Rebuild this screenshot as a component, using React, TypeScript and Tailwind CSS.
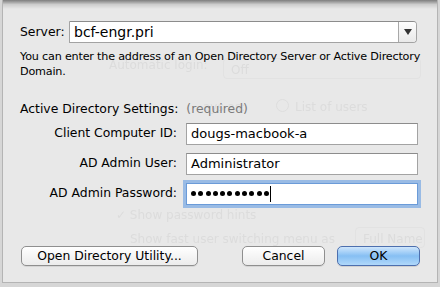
import React from "react";

const ghost = "absolute whitespace-nowrap text-[12px] text-[#dcdcdc] blur-[0.5px]";

function Field({ label, value, focused }: { label: string; value: React.ReactNode; focused?: boolean }) {
  return (
    <div className="flex h-[30px] items-center">
      <div className="w-[157px] text-right text-[12.4px]">{label}</div>
      <div className="ml-[9px] flex w-[232px]">
        <div
          className={`flex h-[22px] w-full items-center border bg-white pl-[4px] text-[13px] ${
            focused
              ? "border-[#6b9bd8] shadow-[0_0_0_3px_rgba(120,168,228,0.7)]"
              : "border-[#a3a3a3] border-t-[#8c8c8c]"
          }`}
        >
          {value}
        </div>
      </div>
    </div>
  );
}

function Dots({ n }: { n: number }) {
  return (
    <span className="flex items-center gap-[2.3px]">
      {Array.from({ length: n }, (_, i) => (
        <span key={i} className="h-[5px] w-[5px] rounded-full bg-black" />
      ))}
    </span>
  );
}

export default function App() {
  return (
    <div
      className="relative h-[287px] w-[440px] overflow-hidden bg-[#d6d6d6] text-[12.4px] text-black"
      style={{ fontFamily: '"DejaVu Sans", "Liberation Sans", sans-serif' }}
    >
      <div className="relative mx-[2px] h-[283px] border-x border-b border-[#b4b4b4] bg-[#e8e8e8]">
        {/* the window behind, showing through the sheet */}
        <div className="pointer-events-none" aria-hidden>
          <span className={`${ghost} left-[106px] top-[56px]`}>Automatic login:</span>
          <div className="absolute left-[220px] top-[58px] h-[21px] w-[198px] rounded-[4px] border border-[#e2e2e2]" />
          <span className={`${ghost} left-[228px] top-[61px]`}>Off</span>
          <span className={`${ghost} left-[200px] top-[98px]`}>ays as:</span>
          <div className="absolute left-[273px] top-[99px] h-[13px] w-[13px] rounded-full border border-[#dedede]" />
          <span className={`${ghost} left-[292px] top-[98px]`}>List of users</span>
          <span className={`${ghost} left-[113px] top-[206px]`}>✓ Show password hints</span>
          <span className={`${ghost} left-[127px] top-[230px]`}>Show fast user switching menu as</span>
          <div className="absolute left-[352px] top-[227px] h-[21px] w-[70px] rounded-[4px] border border-[#e2e2e2]" />
          <span className={`${ghost} left-[360px] top-[230px]`}>Full Name</span>
        </div>

        {/* top shadow from the title bar */}
        <div className="absolute inset-x-0 top-0 h-[9px] bg-gradient-to-b from-[#7e7e7e] via-[#cdcdcd] to-transparent" />

        <div className="relative flex h-full flex-col px-[17px] pt-[21px]">
          <div className="flex items-center">
            <span className="w-[49px]">Server:</span>
            <div className="flex h-[22px] w-[348px] overflow-hidden rounded-r-[4px] border border-[#a3a3a3] border-t-[#8c8c8c] bg-white">
              <div className="flex flex-1 items-center pl-[4px] text-[14px]">bcf-engr.pri</div>
              <div className="flex w-[18px] items-center justify-center border-l border-[#a8a8a8] bg-gradient-to-b from-[#fdfdfd] to-[#e9e9e9]">
                <svg width="8" height="6" viewBox="0 0 8 6">
                  <path d="M0 0h8L4 6z" fill="#333" />
                </svg>
              </div>
            </div>
          </div>

          <p className="-mr-[8px] mt-[6px] text-[11.2px] leading-[15px] tracking-[-0.2px]">
            You can enter the address of an Open Directory Server or Active Directory Domain.
          </p>

          <div className="mt-[21px] flex">
            <span>Active Directory Settings:</span>
            <span className="ml-[8px] text-[#7a7a7a]">(required)</span>
          </div>

          <div className="mt-0 flex flex-col">
            <Field label="Client Computer ID:" value="dougs-macbook-a" />
            <Field label="AD Admin User:" value="Administrator" />
            <Field
              label="AD Admin Password:"
              focused
              value={
                <span className="flex items-center">
                  <Dots n={11} />
                  <span className="ml-[1px] h-[16px] w-[1px] bg-black" />
                </span>
              }
            />
          </div>

          <div className="mt-[37px] flex items-center">
            <button className="ml-[1px] h-[20px] w-[177px] rounded-[5px] border border-[#8f8f8f] bg-gradient-to-b from-white to-[#ececec] shadow-[0_1px_0_rgba(0,0,0,0.08)]">
              Open Directory Utility...
            </button>
            <button className="ml-auto h-[20px] w-[83px] rounded-[5px] border border-[#8f8f8f] bg-gradient-to-b from-white to-[#ececec] shadow-[0_1px_0_rgba(0,0,0,0.08)]">
              Cancel
            </button>
            <button className="ml-[12px] h-[20px] w-[83px] rounded-[5px] border border-[#4d6fae] bg-gradient-to-b from-[#cfe6fc] via-[#86bff3] to-[#b0d8fa] shadow-[0_1px_0_rgba(0,0,0,0.1)]">
              OK
            </button>
          </div>
        </div>
      </div>
    </div>
  );
}
